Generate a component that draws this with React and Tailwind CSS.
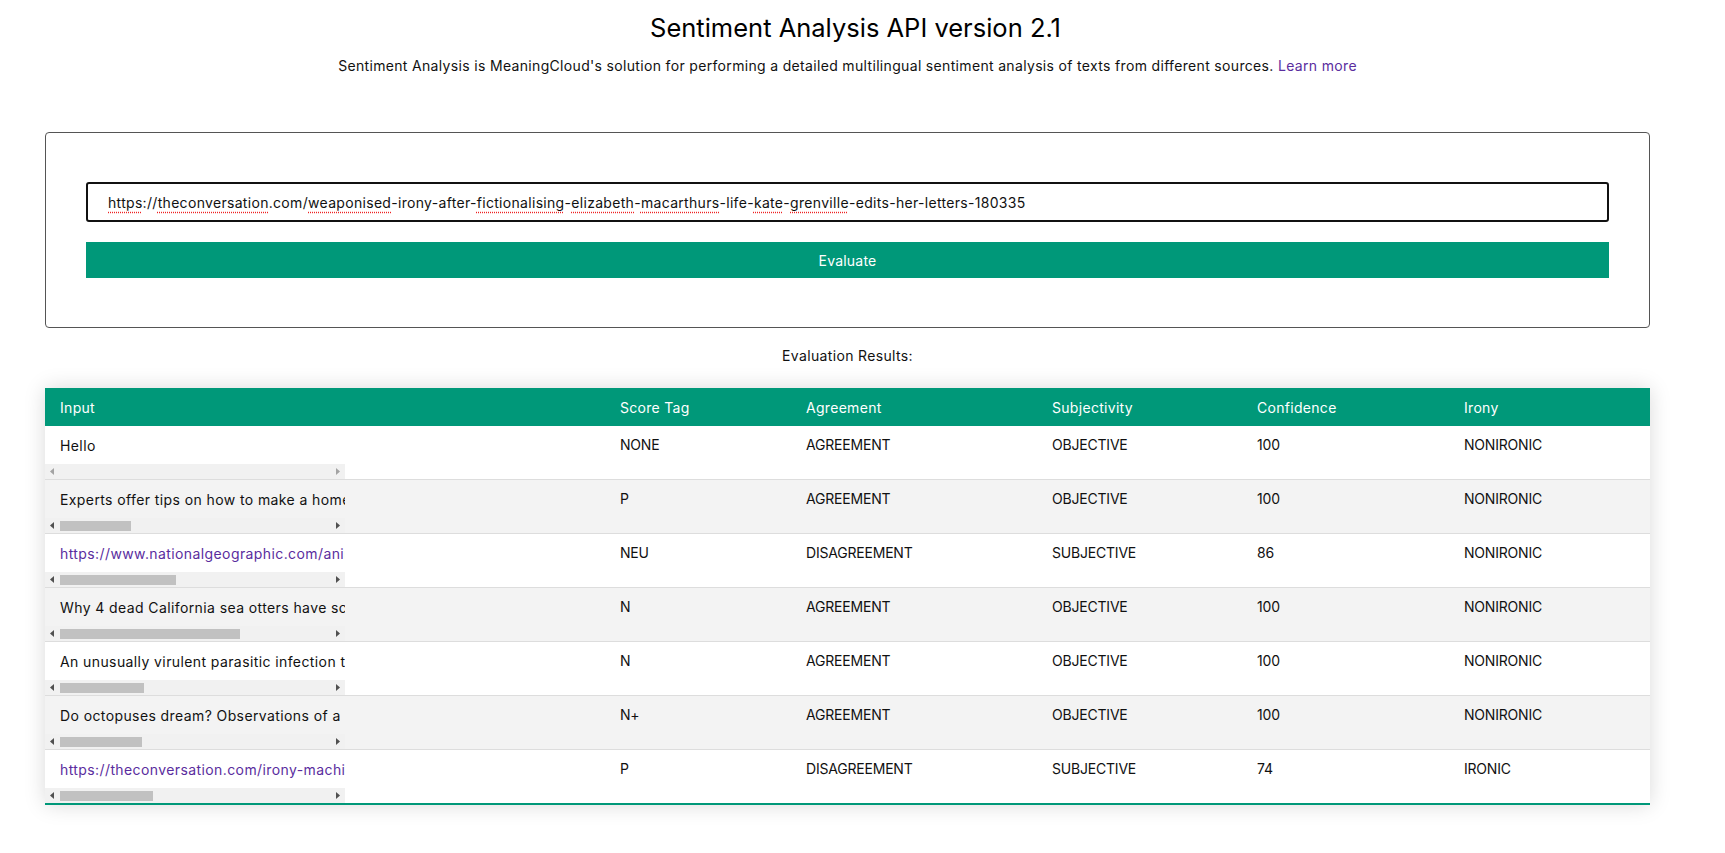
import React from 'react';

const rows = [
  { input: 'Hello', link: false, thumb: 0, score: 'NONE', agreement: 'AGREEMENT', subjectivity: 'OBJECTIVE', confidence: '100', irony: 'NONIRONIC' },
  { input: 'Experts offer tips on how to make a home safer for older adults', link: false, thumb: 71, score: 'P', agreement: 'AGREEMENT', subjectivity: 'OBJECTIVE', confidence: '100', irony: 'NONIRONIC' },
  { input: 'https://www.nationalgeographic.com/animals/article/irony', link: true, thumb: 116, score: 'NEU', agreement: 'DISAGREEMENT', subjectivity: 'SUBJECTIVE', confidence: '86', irony: 'NONIRONIC' },
  { input: 'Why 4 dead California sea otters have scientists worried about a parasite', link: false, thumb: 180, score: 'N', agreement: 'AGREEMENT', subjectivity: 'OBJECTIVE', confidence: '100', irony: 'NONIRONIC' },
  { input: 'An unusually virulent parasitic infection that kills sea otters', link: false, thumb: 84, score: 'N', agreement: 'AGREEMENT', subjectivity: 'OBJECTIVE', confidence: '100', irony: 'NONIRONIC' },
  { input: 'Do octopuses dream? Observations of a sleeping octopus', link: false, thumb: 82, score: 'N+', agreement: 'AGREEMENT', subjectivity: 'OBJECTIVE', confidence: '100', irony: 'NONIRONIC' },
  { input: 'https://theconversation.com/irony-machines-and-meaning', link: true, thumb: 93, score: 'P', agreement: 'DISAGREEMENT', subjectivity: 'SUBJECTIVE', confidence: '74', irony: 'IRONIC' },
];

const urlParts = [
  ['https', true], ['://', false], ['theconversation', true], ['.com/', false], ['weaponised', true],
  ['-irony-after-', false], ['fictionalising', true], ['-', false], ['elizabeth', true], ['-', false],
  ['macarthurs', true], ['-life-', false], ['kate', true], ['-', false], ['grenville', true],
  ['-edits-her-letters-180335', false],
];

function Arrow({ dir, disabled }) {
  const pts = dir === 'left' ? '5,7.5 9,4 9,11' : '10,7.5 6,4 6,11';
  return (
    <svg width="15" height="15" viewBox="0 0 15 15" className="shrink-0">
      <polygon points={pts} fill={disabled ? '#a3a3a3' : '#505050'} />
    </svg>
  );
}

function FakeScrollbar({ thumb }) {
  const disabled = thumb === 0;
  return (
    <div className="flex h-[15px] w-[300px] items-center bg-[#f1f1f1]">
      <Arrow dir="left" disabled={disabled} />
      <div className="flex h-full flex-1 items-center">
        {!disabled && <div className="h-[10px] bg-[#c1c1c1]" style={{ width: thumb }} />}
      </div>
      <Arrow dir="right" disabled={disabled} />
    </div>
  );
}

export default function App() {
  const cell = 'px-[15px] pt-[9px] align-top leading-[20px] tracking-[-0.2px]';

  return (
    <div className="min-h-screen bg-white pl-[45px] pr-[75px] font-['Inter',sans-serif] text-[#111]">
      <h1 className="pt-[13px] pl-[16px] text-center text-[25.5px] leading-[30px] font-normal text-black">
        Sentiment Analysis API version 2.1
      </h1>
      <p className="mt-[13px] text-center text-[14px] leading-[20px] tracking-[0.33px]">
        Sentiment Analysis is MeaningCloud's solution for performing a detailed multilingual sentiment analysis of texts from different sources.{' '}
        <a className="text-[#5a2d9e]">Learn more</a>
      </p>

      <div className="mt-[56px] rounded-[4px] border border-[#555] px-[40px] py-[49px]">
        <div className="flex h-[40px] items-center overflow-hidden whitespace-nowrap rounded-[3px] border-2 border-[#111] px-[20px] text-[14px] tracking-[0.31px] text-[#111]">
          {urlParts.map(([t, bad], i) =>
            bad ? (
              <span key={i} className="underline decoration-[#e22] decoration-dotted underline-offset-[4px]">{t}</span>
            ) : (
              <span key={i}>{t}</span>
            )
          )}
        </div>
        <button className="mt-[20px] h-[36px] w-full bg-[#009879] text-[14px] tracking-[0.2px] text-white">Evaluate</button>
      </div>

      <p className="mt-[18px] text-center text-[14px] leading-[20px] tracking-[0.35px]">Evaluation Results:</p>

      <div className="mt-[22px] shadow-[0_0_20px_rgba(0,0,0,0.15)]">
        <table className="w-full table-fixed border-collapse text-[14px]">
          <colgroup>
            <col className="w-[560px]" />
            <col className="w-[186px]" />
            <col className="w-[246px]" />
            <col className="w-[205px]" />
            <col className="w-[207px]" />
            <col className="w-[201px]" />
          </colgroup>
          <thead>
            <tr className="bg-[#009879] text-left text-white">
              {['Input', 'Score Tag', 'Agreement', 'Subjectivity', 'Confidence', 'Irony'].map((h) => (
                <th key={h} className="h-[38px] px-[15px] font-normal tracking-[0.3px]">{h}</th>
              ))}
            </tr>
          </thead>
          <tbody>
            {rows.map((r, i) => (
              <tr
                key={i}
                className={`${i % 2 === 1 ? 'bg-[#f3f3f3]' : 'bg-white'} ${i === rows.length - 1 ? 'border-b-2 border-[#009879]' : 'border-b border-[#dddddd]'}`}
              >
                <td className="p-0 align-top">
                  <div className="flex h-[53px] w-[300px] flex-col">
                    <div className={`flex h-[38px] items-center overflow-hidden whitespace-nowrap pl-[15px] tracking-[0.4px] ${r.link ? 'text-[#5a2d9e]' : ''}`}>
                      {r.input}
                    </div>
                    <FakeScrollbar thumb={r.thumb} />
                  </div>
                </td>
                <td className={cell}>{r.score}</td>
                <td className={cell}>{r.agreement}</td>
                <td className={cell}>{r.subjectivity}</td>
                <td className={cell}>{r.confidence}</td>
                <td className={cell}>{r.irony}</td>
              </tr>
            ))}
          </tbody>
        </table>
      </div>
    </div>
  );
}
